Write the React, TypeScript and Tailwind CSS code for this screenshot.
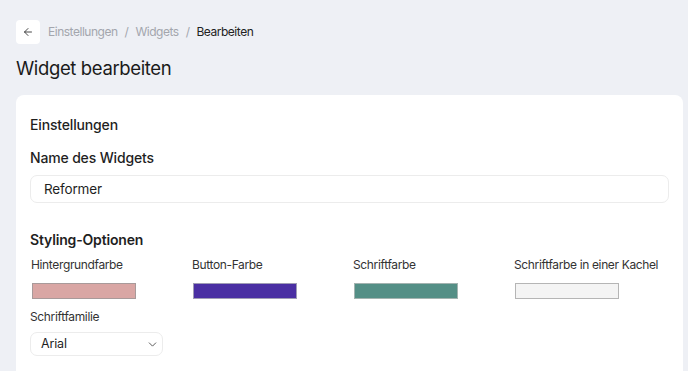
import { ArrowLeft, ChevronDown } from "lucide-react"

const colorFields = [
  { label: "Hintergrundfarbe", color: "#d9a6a4", border: "#a89a9a" },
  { label: "Button-Farbe", color: "#4a2fa3", border: "#9f9cb5" },
  { label: "Schriftfarbe", color: "#548f86", border: "#a3b3b0" },
  { label: "Schriftfarbe in einer Kachel", color: "#f4f4f4", border: "#b5b5b5" },
]

export default function App() {
  return (
    <div className="w-full min-h-screen bg-[#eef0f5] font-['Inter',sans-serif] text-[#1f1f1f] pl-4 pr-[5px] pt-5">
      {/* Breadcrumb */}
      <div className="flex flex-row items-center gap-2 h-6">
        <button className="flex items-center justify-center w-6 h-6 bg-white rounded-[4px]">
          <ArrowLeft className="w-3 h-3 text-[#333]" strokeWidth={1.8} />
        </button>
        <div className="flex flex-row items-center gap-[7px] text-[12px] leading-[18px] tracking-[-0.04em]">
          <span className="text-[#a3a6ad]">Einstellungen</span>
          <span className="text-[#a3a6ad]">/</span>
          <span className="text-[#a3a6ad]">Widgets</span>
          <span className="text-[#a3a6ad]">/</span>
          <span className="text-[#222]">Bearbeiten</span>
        </div>
      </div>

      <h1 className="mt-3 text-[18.5px] leading-[24px] font-normal tracking-[-0.02em] text-[#1a1a1a]">Widget bearbeiten</h1>

      {/* Card */}
      <div className="mt-[15px] bg-white rounded-[8px] px-[14px] pt-5 pb-6 tracking-[-0.01em]">
        <h2 className="text-[14px] leading-[20px] font-medium">Einstellungen</h2>

        <h3 className="mt-[13px] text-[14px] leading-[20px] font-medium">Name des Widgets</h3>
        <div className="mt-[7px] h-[28px] border border-[#ececec] rounded-[7px] flex items-center px-[13px] text-[13.5px]">
          Reformer
        </div>

        <h3 className="mt-[27px] text-[14px] leading-[20px] font-semibold">Styling-Optionen</h3>
        <div className="mt-[6px] grid grid-cols-[161px_161px_161px_1fr] pl-[1px]">
          {colorFields.map(f => (
            <div key={f.label} className="flex flex-col">
              <span className="text-[12px] leading-[18px] tracking-[-0.03em] text-[#333]">{f.label}</span>
              <div
                className="mt-[9px] w-[104px] h-4 ml-[1px] border"
                style={{ backgroundColor: f.color, borderColor: f.border }}
              />
            </div>
          ))}
        </div>

        <span className="block mt-[9px] text-[12px] leading-[18px] tracking-[-0.03em] text-[#333]">Schriftfamilie</span>
        <div className="mt-[6px] w-[133px] h-[24px] border border-[#ececec] rounded-[7px] flex items-center justify-between pl-[10px] pr-[3px] text-[12.5px]">
          <span>Arial</span>
          <ChevronDown className="w-[13px] h-[13px] text-[#444]" strokeWidth={1.6} />
        </div>
      </div>
    </div>
  )
}
